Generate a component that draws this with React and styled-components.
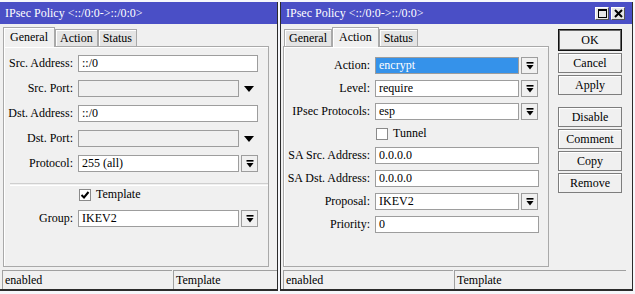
import React from "react"
import styled, { createGlobalStyle } from "styled-components"

const GlobalStyle = createGlobalStyle`
  html, body {
    margin: 0;
    padding: 0;
    background: #f6f7fb;
  }
`

const DropGlyph = () => (
  <svg width="8" height="8" viewBox="0 0 8 8">
    <rect x="0.5" y="0" width="7" height="1.6" fill="#000" />
    <polygon points="0.5,3 7.5,3 4,7.5" fill="#000" />
  </svg>
)

const Triangle = () => (
  <svg width="10" height="6" viewBox="0 0 10 6">
    <polygon points="0,0 10,0 5,6" fill="#000" />
  </svg>
)

const Tick = () => (
  <svg width="10" height="10" viewBox="0 0 10 10">
    <path d="M1.5 5 L4 7.5 L8.5 2" stroke="#000" strokeWidth="2" fill="none" />
  </svg>
)

const MaxIcon = () => (
  <svg width="9" height="9" viewBox="0 0 9 9">
    <rect x="0.5" y="0.5" width="8" height="8" fill="none" stroke="#000" />
    <rect x="0" y="0" width="9" height="2" fill="#000" />
  </svg>
)

const CloseIcon = () => (
  <svg width="9" height="9" viewBox="0 0 9 9">
    <path d="M1 1 L8 8 M8 1 L1 8" stroke="#000" strokeWidth="2" />
  </svg>
)

const App = () => {
  return (
    <>
      <GlobalStyle />
      <Desktop>
        <Window $w={278} $noLeft>
          <TitleBar>
            <span>IPsec Policy &lt;::/0:0-&gt;::/0:0&gt;</span>
          </TitleBar>
          <Body>
            <Main $ml={3}>
              <Tabs>
                <Tab $active>General</Tab>
                <Tab>Action</Tab>
                <Tab>Status</Tab>
              </Tabs>
              <Panel $pt={8} $gap={8}>
                <Row>
                  <Label $w={74}>Src. Address:</Label>
                  <Field $w={180}>::/0</Field>
                </Row>
                <Row>
                  <Label $w={74}>Src. Port:</Label>
                  <Field $w={161} $disabled />
                  <ArrowSlot>
                    <Triangle />
                  </ArrowSlot>
                </Row>
                <Row>
                  <Label $w={74}>Dst. Address:</Label>
                  <Field $w={180}>::/0</Field>
                </Row>
                <Row>
                  <Label $w={74}>Dst. Port:</Label>
                  <Field $w={161} $disabled />
                  <ArrowSlot>
                    <Triangle />
                  </ArrowSlot>
                </Row>
                <Row>
                  <Label $w={74}>Protocol:</Label>
                  <Field $w={161}>255 (all)</Field>
                  <DropBtn>
                    <DropGlyph />
                  </DropBtn>
                </Row>
                <Separator />
                <CheckRow $pl={75}>
                  <CheckBox>
                    <Tick />
                  </CheckBox>
                  Template
                </CheckRow>
                <Row>
                  <Label $w={74}>Group:</Label>
                  <Field $w={161}>IKEV2</Field>
                  <DropBtn>
                    <DropGlyph />
                  </DropBtn>
                </Row>
              </Panel>
            </Main>
          </Body>
          <StatusBar>
            <StatusCell $w={170}>enabled</StatusCell>
            <StatusCell $w={120}>Template</StatusCell>
          </StatusBar>
        </Window>

        <Window $w={353}>
          <TitleBar>
            <span>IPsec Policy &lt;::/0:0-&gt;::/0:0&gt;</span>
            <TitleButtons>
              <TitleBtn>
                <MaxIcon />
              </TitleBtn>
              <TitleBtn>
                <CloseIcon />
              </TitleBtn>
            </TitleButtons>
          </TitleBar>
          <Body>
            <Main $ml={2}>
              <Tabs $pl={1}>
                <Tab>General</Tab>
                <Tab $active>Action</Tab>
                <Tab>Status</Tab>
              </Tabs>
              <Panel $pt={10} $gap={6}>
                <Row>
                  <Label $w={91}>Action:</Label>
                  <Field $w={144} $selected>
                    encrypt
                  </Field>
                  <DropBtn>
                    <DropGlyph />
                  </DropBtn>
                </Row>
                <Row>
                  <Label $w={91}>Level:</Label>
                  <Field $w={144}>require</Field>
                  <DropBtn>
                    <DropGlyph />
                  </DropBtn>
                </Row>
                <Row>
                  <Label $w={91}>IPsec Protocols:</Label>
                  <Field $w={144}>esp</Field>
                  <DropBtn>
                    <DropGlyph />
                  </DropBtn>
                </Row>
                <CheckRow $pl={92}>
                  <CheckBox />
                  Tunnel
                </CheckRow>
                <Row>
                  <Label $w={91}>SA Src. Address:</Label>
                  <Field $w={164}>0.0.0.0</Field>
                </Row>
                <Row>
                  <Label $w={91}>SA Dst. Address:</Label>
                  <Field $w={164}>0.0.0.0</Field>
                </Row>
                <Row>
                  <Label $w={91}>Proposal:</Label>
                  <Field $w={144}>IKEV2</Field>
                  <DropBtn>
                    <DropGlyph />
                  </DropBtn>
                </Row>
                <Row>
                  <Label $w={91}>Priority:</Label>
                  <Field $w={164}>0</Field>
                </Row>
              </Panel>
            </Main>
            <Buttons>
              <Button $default>OK</Button>
              <Button>Cancel</Button>
              <Button>Apply</Button>
              <Button $mt={10}>Disable</Button>
              <Button>Comment</Button>
              <Button>Copy</Button>
              <Button>Remove</Button>
            </Buttons>
          </Body>
          <StatusBar>
            <StatusCell $w={170}>enabled</StatusCell>
            <StatusCell $w={172}>Template</StatusCell>
          </StatusBar>
        </Window>
      </Desktop>
    </>
  )
}

export default App

const Desktop = styled.div`
  display: flex;
  align-items: flex-start;
  gap: 2px;
  padding-top: 2px;
  width: 635px;
  height: 294px;
  box-sizing: border-box;
  overflow: hidden;
  font-family: "Liberation Serif", "DejaVu Serif", "Times New Roman", serif;
  font-size: 12px;
  color: #000;
`

const Window = styled.div`
  box-sizing: border-box;
  flex-shrink: 0;
  width: ${p => p.$w}px;
  height: 289px;
  display: flex;
  flex-direction: column;
  background: #f0f0f0;
  border-right: 1px solid #2b2b2b;
  border-bottom: 2px solid #2b2b2b;
  border-left: ${p => (p.$noLeft ? "none" : "1px solid #2b2b2b")};
  overflow: hidden;
`

const TitleBar = styled.div`
  flex-shrink: 0;
  height: 22px;
  display: flex;
  align-items: center;
  justify-content: space-between;
  padding: 0 7px 0 5px;
  background: #4a4fc6;
  color: #fff;
  white-space: nowrap;
`

const TitleButtons = styled.div`
  display: flex;
  gap: 2px;
`

const TitleBtn = styled.div`
  box-sizing: border-box;
  width: 14px;
  height: 13px;
  display: flex;
  align-items: center;
  justify-content: center;
  background: #e6e6e6;
  border: 1px solid #fff;
  border-right-color: #555;
  border-bottom-color: #555;
`

const Body = styled.div`
  display: flex;
  flex: 1;
  min-height: 0;
`

const Main = styled.div`
  display: flex;
  flex-direction: column;
  width: 266px;
  margin-left: ${p => p.$ml}px;
  flex-shrink: 0;
`

const Tabs = styled.div`
  height: 22px;
  display: flex;
  align-items: flex-end;
  padding-left: ${p => p.$pl || 0}px;
`

const Tab = styled.div`
  box-sizing: border-box;
  position: relative;
  z-index: ${p => (p.$active ? 1 : 0)};
  height: ${p => (p.$active ? 20 : 17)}px;
  margin-bottom: ${p => (p.$active ? -1 : 0)}px;
  padding: 0 ${p => (p.$active ? 6 : 4)}px;
  display: flex;
  align-items: center;
  background: ${p => (p.$active ? "#f0f0f0" : "#e4e4e4")};
  border: 1px solid #a9a9a9;
  border-bottom: none;
  box-shadow: inset 1px 1px 0 #fff;
`

const Panel = styled.div`
  box-sizing: border-box;
  height: 221px;
  display: flex;
  flex-direction: column;
  gap: ${p => p.$gap}px;
  padding-top: ${p => p.$pt}px;
  border: 1px solid #a9a9a9;
  box-shadow: inset 1px 1px 0 #fff;
`

const Row = styled.div`
  display: flex;
  align-items: center;
  height: 17px;
  flex-shrink: 0;
`

const Label = styled.div`
  box-sizing: border-box;
  width: ${p => p.$w}px;
  padding-right: 5px;
  text-align: right;
  white-space: nowrap;
`

const Field = styled.div`
  box-sizing: border-box;
  width: ${p => p.$w}px;
  height: 17px;
  padding-left: 3px;
  line-height: 15px;
  border: 1px solid #9d9d9d;
  background: ${p => (p.$selected ? "#3592ea" : p.$disabled ? "#f0f0f0" : "#fff")};
  color: ${p => (p.$selected ? "#fff" : "#000")};
  white-space: nowrap;
  overflow: hidden;
`

const DropBtn = styled.div`
  box-sizing: border-box;
  width: 17px;
  height: 17px;
  margin-left: 2px;
  display: flex;
  align-items: center;
  justify-content: center;
  background: #f0f0f0;
  border: 1px solid #9d9d9d;
`

const ArrowSlot = styled.div`
  width: 19px;
  display: flex;
  align-items: center;
  justify-content: center;
`

const Separator = styled.div`
  height: 1px;
  margin: 3px 0 -7px 6px;
  border-top: 1px solid #cfcfcf;
  border-bottom: 1px solid #fff;
  flex-shrink: 0;
`

const CheckRow = styled.div`
  display: flex;
  align-items: center;
  gap: 5px;
  height: 15px;
  padding-left: ${p => p.$pl}px;
  flex-shrink: 0;
`

const CheckBox = styled.div`
  box-sizing: border-box;
  width: 12px;
  height: 12px;
  display: flex;
  align-items: center;
  justify-content: center;
  background: #fff;
  border: 1px solid #8a8a8a;
`

const Buttons = styled.div`
  display: flex;
  flex-direction: column;
  gap: 2px;
  padding-top: 5px;
  margin-left: 9px;
`

const Button = styled.div`
  box-sizing: border-box;
  width: 64px;
  height: ${p => (p.$default ? 22 : 20)}px;
  margin-top: ${p => p.$mt || 0}px;
  display: flex;
  align-items: center;
  justify-content: center;
  background: #f0f0f0;
  border: 1px solid ${p => (p.$default ? "#111" : "#7d7d7d")};
  box-shadow: ${p => (p.$default ? "inset 0 0 0 1px #6a6a6a" : "inset 1px 1px 0 #fff")};
`

const StatusBar = styled.div`
  display: flex;
  gap: 1px;
  height: 19px;
  margin-top: 2px;
  padding-left: 2px;
  flex-shrink: 0;
`

const StatusCell = styled.div`
  box-sizing: border-box;
  flex-shrink: 0;
  width: ${p => p.$w}px;
  padding-left: 2px;
  line-height: 18px;
  border-top: 1px solid #a0a0a0;
  border-left: 1px solid #a0a0a0;
  white-space: nowrap;
`
